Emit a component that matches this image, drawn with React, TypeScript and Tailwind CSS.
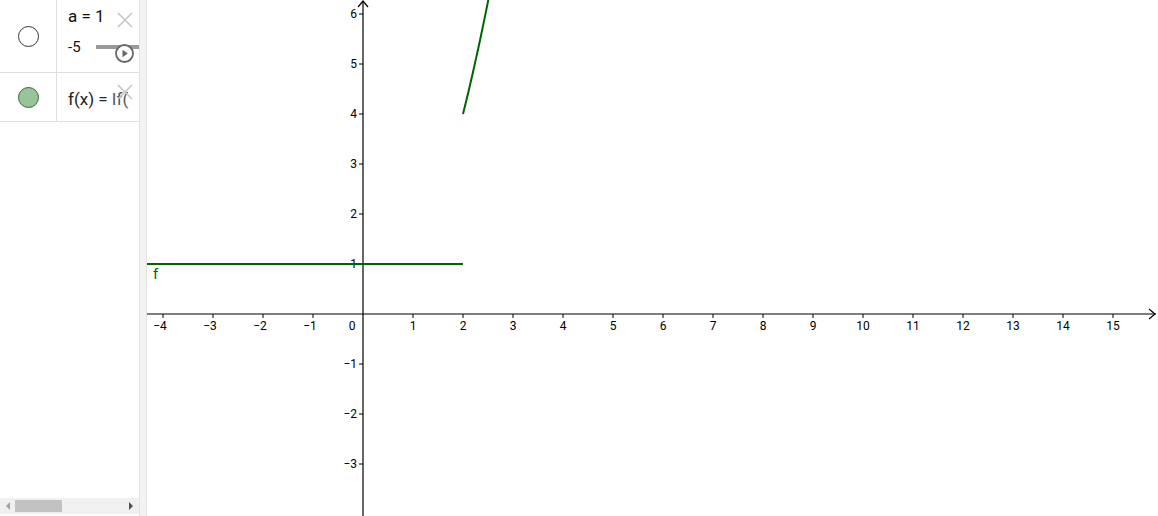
const O_X = 216; // origin x inside the graphics view (363 - 147)
const O_Y = 314;
const S = 50;

const px = (x: number) => O_X + x * S;
const py = (y: number) => O_Y - y * S;

function Graph() {
  const xs = [-4, -3, -2, -1, 1, 2, 3, 4, 5, 6, 7, 8, 9, 10, 11, 12, 13, 14, 15];
  const ys = [-3, -2, -1, 1, 2, 3, 4, 5, 6];
  const curve: string[] = [];
  for (let i = 0; i <= 20; i++) {
    const x = 2 + (i / 20) * 0.52;
    curve.push(`${i === 0 ? "M" : "L"}${px(x).toFixed(2)} ${py(x * x).toFixed(2)}`);
  }
  const lbl = (n: number) => (n < 0 ? `\u2212${-n}` : `${n}`);

  return (
    <svg width="1011" height="516" className="block" style={{ fontFamily: "Roboto, sans-serif" }}>
      {/* axes */}
      <line x1="0" y1={O_Y} x2="1009" y2={O_Y} stroke="#000" strokeWidth="1.2" />
      <polyline points={`1002,${O_Y - 5} 1008,${O_Y} 1002,${O_Y + 5}`} fill="none" stroke="#000" strokeWidth="1.2" />
      <line x1={O_X} y1="1" x2={O_X} y2="516" stroke="#000" strokeWidth="1.2" />
      <polyline points={`${O_X - 5},7 ${O_X},1 ${O_X + 5},7`} fill="none" stroke="#000" strokeWidth="1.2" />

      {xs.map((x) => (
        <g key={x}>
          <line x1={px(x)} y1={O_Y} x2={px(x)} y2={O_Y + 4} stroke="#000" />
          <text x={px(x) - (x < 0 ? 3 : 0)} y={O_Y + 16} fontSize="12" textAnchor="middle" fill="#000">
            {lbl(x)}
          </text>
        </g>
      ))}
      <text x={O_X - 11} y={O_Y + 16} fontSize="12" textAnchor="middle" fill="#000">0</text>

      {ys.map((y) => (
        <g key={y}>
          <line x1={O_X - 4} y1={py(y)} x2={O_X} y2={py(y)} stroke="#000" />
          <text x={O_X - 6} y={py(y) + 4} fontSize="12" textAnchor="end" fill="#000">
            {lbl(y)}
          </text>
        </g>
      ))}

      {/* f */}
      <line x1="0" y1={py(1)} x2={px(2)} y2={py(1)} stroke="#006400" strokeWidth="2" />
      <path d={curve.join(" ")} fill="none" stroke="#006400" strokeWidth="2" />
      <text x="6" y={py(1) + 15} fontSize="15" fill="#006400" stroke="#fff" strokeWidth="3" paintOrder="stroke">
        f
      </text>
    </svg>
  );
}

function CloseX({ className }: { className: string }) {
  return (
    <svg className={className} width="18" height="18" viewBox="0 0 18 18">
      <path d="M2 2 L16 16 M16 2 L2 16" stroke="#c6c6c6" strokeWidth="1.6" />
    </svg>
  );
}

function AlgebraView() {
  return (
    <div className="w-[139px] h-full flex flex-col bg-white relative overflow-hidden" style={{ fontFamily: "Roboto, sans-serif" }}>
      <div className="h-[73px] flex border-b border-[#e0e0e0]">
        <div className="w-[57px] shrink-0 border-r border-[#e0e0e0] flex items-center justify-center">
          <div className="w-[21px] h-[21px] rounded-full border border-[#333] bg-white" />
        </div>
        <div className="flex-1 relative">
          <div className="pl-[11px] pt-[5px] text-[17px] leading-[22px] text-[#111]">a = 1</div>
          <div className="flex items-center mt-[12px]">
            <span className="pl-[11px] w-[39px] text-[15px] leading-[16px] text-[#111]">-5</span>
            <div className="flex-1 h-[4px] bg-[#9a9a9a]" />
          </div>
          <CloseX className="absolute left-[59px] top-[11px]" />
          <svg className="absolute left-[57px] top-[43px]" width="21" height="21" viewBox="0 0 21 21">
            <circle cx="10.5" cy="10.5" r="8.5" fill="#fff" stroke="#666" strokeWidth="1.8" />
            <path d="M8.5 6.8 L13.8 10.5 L8.5 14.2 Z" fill="#666" />
          </svg>
        </div>
      </div>
      <div className="h-[49px] flex border-b border-[#e0e0e0]">
        <div className="w-[57px] shrink-0 border-r border-[#e0e0e0] flex items-center justify-center">
          <div className="w-[21px] h-[21px] rounded-full border border-[#2f6b2f] bg-[#99c499]" />
        </div>
        <div className="flex-1 relative">
          <div className="pl-[11px] pt-[15px] text-[17px] leading-[22px] text-[#222] whitespace-nowrap">
            f(x) = <span className="text-[#555]">If(</span>
          </div>
          <CloseX className="absolute left-[59px] top-[10px]" />
        </div>
      </div>
      <div className="flex-1" />
      <div className="h-[16px] mb-[2px] bg-[#f0f0f0] flex items-center">
        <div className="w-[15px] flex justify-center">
          <div className="w-0 h-0 border-y-[4px] border-y-transparent border-r-[4px] border-r-[#a3a3a3]" />
        </div>
        <div className="w-[47px] h-[12px] bg-[#c2c2c2]" />
        <div className="flex-1" />
        <div className="w-[16px] flex justify-center">
          <div className="w-0 h-0 border-y-[4px] border-y-transparent border-l-[4px] border-l-[#505050]" />
        </div>
      </div>
    </div>
  );
}

export default function App() {
  return (
    <div className="w-[1158px] h-[516px] flex bg-white overflow-hidden">
      <AlgebraView />
      <div className="w-[8px] h-full bg-[#f3f3f3] border-l border-r border-[#e2e2e2]" />
      <div className="flex-1 h-full">
        <Graph />
      </div>
    </div>
  );
}
